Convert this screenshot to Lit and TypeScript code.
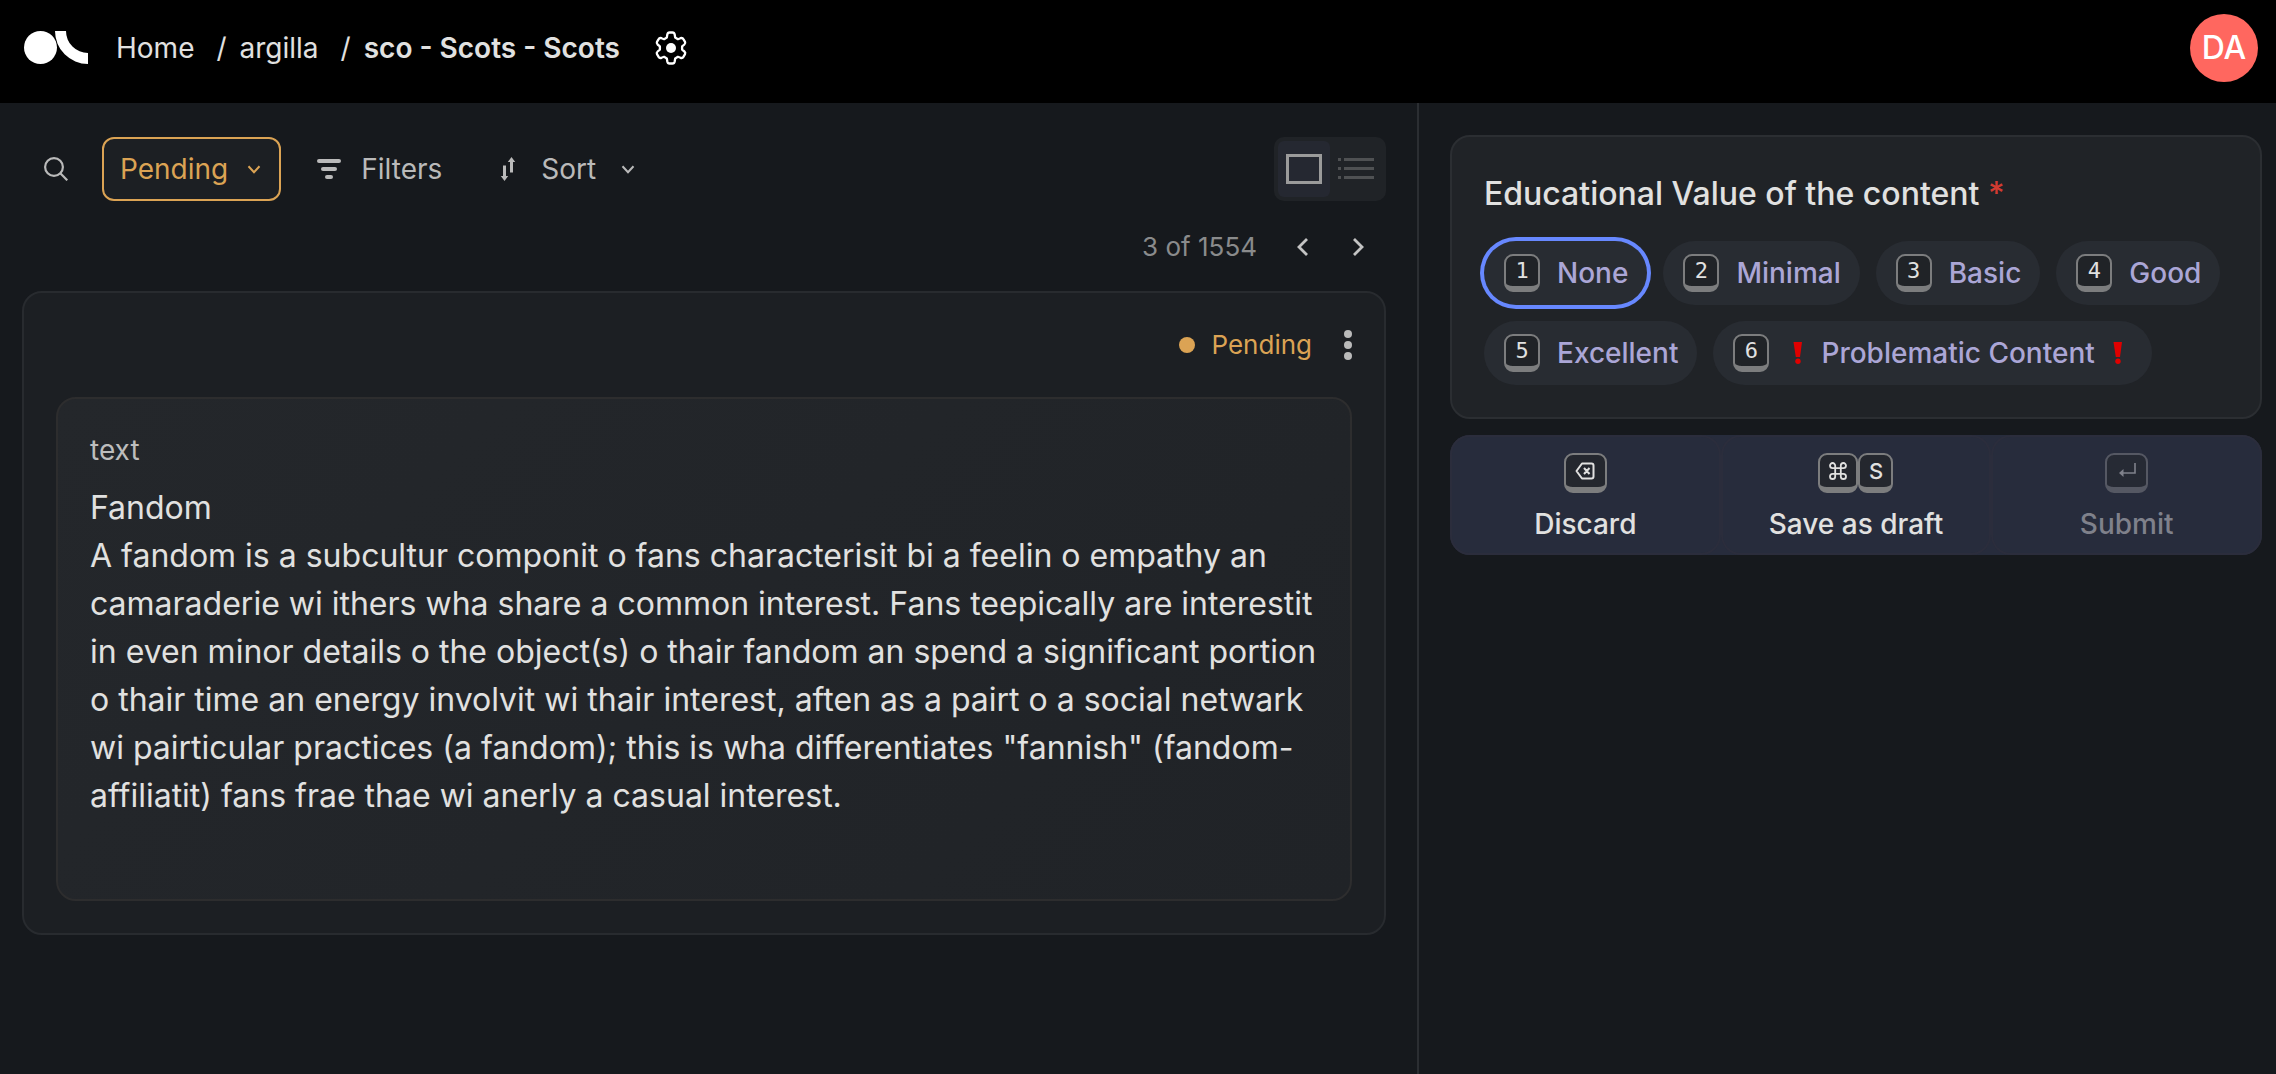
import { LitElement, html, css } from "lit";
import { customElement } from "lit/decorators.js";

interface Option { key: string; label: string; flagged?: boolean }

@customElement("app-root")
export class AppRoot extends LitElement {
  private options: Option[] = [
    { key: "1", label: "None" },
    { key: "2", label: "Minimal" },
    { key: "3", label: "Basic" },
    { key: "4", label: "Good" },
    { key: "5", label: "Excellent" },
    { key: "6", label: "Problematic Content", flagged: true },
  ];

  static styles = css`
    :host {
      display: flex;
      flex-direction: column;
      min-height: 100vh;
      background: #16191d;
      color: #e1e1e0;
      font-family: Inter, "Liberation Sans", sans-serif;
      font-size: 28px;
      line-height: 36px;
    }
    * { box-sizing: border-box; }
    svg { display: block; flex: none; }
    button {
      font: inherit;
      color: inherit;
      background: none;
      border: 0;
      padding: 0;
      margin: 0;
      display: flex;
      align-items: center;
    }
    a { color: inherit; text-decoration: none; }

    .topbar {
      display: flex;
      align-items: center;
      height: 103px;
      padding: 0 18px 8px 24px;
      background: #000;
    }
    .crumbs {
      display: flex;
      align-items: center;
      margin-left: 28px;
      flex: 1;
    }
    .crumbs ol {
      display: flex;
      list-style: none;
      margin: 0;
      padding: 0;
    }
    .crumb + .crumb::before { content: "/"; margin: 0 13px 0 22px; }
    .current { font-weight: 600; }
    .gear { margin-left: 34px; color: #fff; }
    .avatar {
      justify-content: center;
      width: 68px;
      height: 68px;
      border-radius: 50%;
      background: #ff675f;
      color: #fff;
      font-size: 32px;
      font-weight: 500;
    }

    .columns { display: flex; flex: 1; }
    .main {
      flex: 1;
      min-width: 0;
      padding: 34px 31px 32px 22px;
    }
    .side {
      width: 859px;
      flex: none;
      padding: 32px 14px 32px 31px;
      border-left: 2px solid #2b2e32;
    }

    .toolbar { display: flex; align-items: center; color: #bababa; }
    .search { padding: 20px 20px 20px 22px; }
    .status {
      height: 64px;
      margin-left: 14px;
      padding: 0 18px 0 16px;
      gap: 19px;
      border: 2px solid #dba354;
      border-radius: 12px;
      background: #1c1f23;
      color: #dba354;
    }
    .filters { gap: 20px; margin-left: 36px; }
    .sort { gap: 25px; margin-left: 58px; }
    .views {
      display: flex;
      margin-left: auto;
      padding: 4px;
      height: 64px;
      border-radius: 10px;
      background: #202327;
    }
    .view { width: 52px; justify-content: center; border-radius: 6px; color: #4f5153; }
    .view.on { background: #252831; color: #9b9b9b; }

    .pager {
      display: flex;
      align-items: center;
      justify-content: flex-end;
      gap: 18px;
      height: 48px;
      margin: 22px 9px 20px 0;
      color: #8a8b8c;
      font-size: 26px;
    }
    .position { margin-right: 8px; }
    .step { width: 38px; height: 36px; justify-content: center; color: #c4c4c4; }

    .record {
      padding: 0 32px 32px;
      border: 2px solid #282b2f;
      border-radius: 20px;
      background: #1c1f23;
    }
    .record-head {
      display: flex;
      align-items: center;
      justify-content: flex-end;
      height: 104px;
      color: #dba354;
      font-size: 26px;
    }
    .dot { width: 16px; height: 16px; border-radius: 50%; background: #dba354; margin-right: 16px; }
    .more { margin-left: 32px; color: #bababa; }
    .field {
      padding: 33px 32px 79px;
      border: 2px solid #2d2d2e;
      border-radius: 20px;
      background: linear-gradient(135deg, #24272b, #202327);
    }
    .field-name { margin: 0 0 16px; font-size: 28px; font-weight: 400; line-height: 36px; color: #bdbdbd; }
    .field-text { margin: 0; font-size: 32px; line-height: 48px; }

    .question {
      margin: 0;
      padding: 33px 32px 32px;
      border: 2px solid #2b2e32;
      border-radius: 20px;
      background: #202327;
    }
    .title { margin: 0 0 23px; font-size: 32px; font-weight: 500; line-height: 48px; }
    .required { color: #d23b31; }
    .options { display: flex; flex-wrap: wrap; gap: 16px; }
    .option {
      height: 64px;
      padding: 0 19px 0 20px;
      gap: 17px;
      border-radius: 32px;
      background: #282c32;
      color: #aba6d6;
      font-weight: 500;
    }
    .option.focused { box-shadow: 0 0 0 4px #6788ff; }
    .option-label { display: flex; }
    .flag { display: flex; align-items: center; width: 28px; justify-content: center; color: #e00000; }
    .flag.before { margin: 0 9px 0 -2px; }
    .flag.after { margin: 0 1px 0 9px; }

    .key {
      display: flex;
      align-items: center;
      justify-content: center;
      width: 36px;
      height: 38px;
      border: 2px solid #7c7d7e;
      border-bottom-width: 6px;
      border-radius: 9px;
      background: #202327;
      color: #e1e1e0;
      font-family: "DejaVu Sans Mono", monospace;
      font-size: 22px;
      font-weight: 400;
      line-height: 28px;
    }
    .actions {
      display: grid;
      grid-template-columns: repeat(3, 1fr);
      margin-top: 16px;
      border-radius: 20px;
      background: #272c3c;
    }
    .action {
      flex-direction: column;
      gap: 13px;
      height: 120px;
      padding-top: 16px;
      border: 2px solid #2b2d3c;
      border-radius: 20px;
      font-weight: 500;
    }
    .action .key {
      width: 43px;
      height: 40px;
      background: #24272e;
      font-family: Inter, sans-serif;
      font-size: 22px;
      font-weight: 500;
    }
    .action .key.narrow { width: 35px; }
    .action .key.mid { width: 40px; }
    .keys { display: flex; }
    .action[disabled] { color: #7f818b; }
    .action[disabled] .key { border-color: #555863; background: #262a34; color: #7f818b; }
  `;

  private chevron() {
    return html`<svg width="14" height="9" viewBox="0 0 14 9" fill="none" stroke="currentColor" stroke-width="2"><path d="M1.500 1.200l5.500 6 5.500-6" /></svg>`;
  }

  private flag(side: string) {
    return html`<span class="flag ${side}"><svg width="10" height="22" viewBox="0 0 10 22" fill="currentColor"><path d="M0.5 0H9L7 15H2.8z" /><circle cx="5" cy="19.3" r="2.7" /></svg></span>`;
  }

  render() {
    return html`
      <header class="topbar">
        <a href="#" aria-label="Argilla"><svg width="64" height="34" viewBox="0 0 64 34" fill="#fff"><circle cx="16.5" cy="16.5" r="16.5" /><path d="M31 0H42A22 22 0 0 0 64 22V33A33 33 0 0 1 31 0z" /></svg></a>
        <nav class="crumbs" aria-label="Breadcrumb">
          <ol>
            <li class="crumb"><a href="#">Home</a></li>
            <li class="crumb"><a href="#">argilla</a></li>
            <li class="crumb"><a class="current" href="#">sco - Scots - Scots</a></li>
          </ol>
          <button class="gear" aria-label="Settings">
            <svg width="34" height="34" viewBox="0 0 34 34" fill="none" stroke="currentColor" stroke-width="2.3" stroke-linejoin="round"><path d="M12.8 6.6L13.3 3.5Q13.7 1.5 15.5 1.5H18.5Q20.3 1.5 20.7 3.5L21.2 6.6L23.9 8.2L26.5 7.2Q28.5 6.5 29.4 8.1L31 10.8Q31.8 12.3 30.4 13.5L28.1 15.4V18.6L30.4 20.5Q31.8 21.7 31 23.2L29.4 25.9Q28.5 27.5 26.5 26.8L23.9 25.8L21.2 27.4L20.7 30.5Q20.3 32.5 18.5 32.5H15.5Q13.7 32.5 13.3 30.5L12.8 27.4L10.1 25.8L7.5 26.8Q5.5 27.5 4.6 25.9L3 23.2Q2.2 21.7 3.6 20.5L5.9 18.6V15.4L3.6 13.5Q2.2 12.3 3 10.8L4.6 8.1Q5.5 6.5 7.5 7.2L10.1 8.2z" /><circle cx="17" cy="17" r="5" fill="currentColor" stroke="none" /></svg>
          </button>
        </nav>
        <button class="avatar" aria-label="Account">DA</button>
      </header>
      <div class="columns">
        <main class="main">
          <div class="toolbar">
            <button class="search" aria-label="Search"><svg width="24" height="24" viewBox="0 0 24 24" fill="none" stroke="currentColor" stroke-width="2.2"><circle cx="10" cy="10" r="8.9" /><path d="M16.3 16.3L23.3 23.3" /></svg></button>
            <button class="status">Pending ${this.chevron()}</button>
            <button class="filters"><svg width="24" height="20" viewBox="0 0 24 20" fill="currentColor"><rect width="24" height="4" rx="2" /><rect x="4" y="8" width="16" height="4" rx="2" /><rect x="8" y="16" width="8" height="4" rx="2" /></svg>Filters</button>
            <button class="sort"><svg width="16" height="24" viewBox="0 0 16 24" fill="currentColor"><path d="M3 8.500h3V19h2.200L4.500 24 0.800 19H3zM10 15.500V5H7.800L11.500 0l3.700 5H13v10.500z" /></svg>Sort ${this.chevron()}</button>
            <div class="views">
              <button class="view on" aria-label="Focus view"><svg width="36" height="30" viewBox="0 0 36 30" fill="none" stroke="currentColor" stroke-width="3"><rect x="1.5" y="1.5" width="33" height="27" /></svg></button>
              <button class="view" aria-label="List view"><svg width="36" height="22" viewBox="0 0 36 22" fill="currentColor"><path d="M0 0h3v3H0zM0 9h3v3H0zM0 18h3v3H0z" /><path d="M6 0h30v3H6zM6 9h30v3H6zM6 18h30v3H6z" /></svg></button>
            </div>
          </div>
          <div class="pager">
            <span class="position">3 of 1554</span>
            <button class="step" aria-label="Previous"><svg width="11" height="18" viewBox="0 0 11 18" fill="none" stroke="currentColor" stroke-width="2.8"><path d="M10 1L2 9l8 8" /></svg></button>
            <button class="step" aria-label="Next"><svg width="11" height="18" viewBox="0 0 11 18" fill="none" stroke="currentColor" stroke-width="2.8"><path d="M1 1l8 8-8 8" /></svg></button>
          </div>
          <article class="record">
            <div class="record-head">
              <span class="dot"></span>Pending
              <button class="more" aria-label="More"><svg width="8" height="30" viewBox="0 0 8 30" fill="currentColor"><circle cx="4" cy="4" r="4" /><circle cx="4" cy="15" r="4" /><circle cx="4" cy="26" r="4" /></svg></button>
            </div>
            <section class="field">
              <h2 class="field-name">text</h2>
              <p class="field-text">Fandom<br />A fandom is a subcultur componit o fans characterisit bi a feelin o empathy an camaraderie wi ithers wha share a common interest. Fans teepically are interestit in even minor details o the object(s) o thair fandom an spend a significant portion o thair time an energy involvit wi thair interest, aften as a pairt o a social netwark wi pairticular practices (a fandom); this is wha differentiates "fannish" (fandom-affiliatit) fans frae thae wi anerly a casual interest.</p>
            </section>
          </article>
        </main>
        <aside class="side">
          <section class="question">
            <h2 class="title">Educational Value of the content <span class="required">*</span></h2>
            <div class="options">
              ${this.options.map((o, i) => html`<button class="option ${i === 0 ? "focused" : ""}">
                <span class="key">${o.key}</span>
                <span class="option-label">${o.flagged ? this.flag("before") : ""}${o.label}${o.flagged ? this.flag("after") : ""}</span>
              </button>`)}
            </div>
          </section>
          <div class="actions">
            <button class="action"><span class="keys"><span class="key"><svg width="20" height="18" viewBox="0 0 20 18" fill="none" stroke="currentColor" stroke-width="2" stroke-linejoin="round"><path d="M7 1.5H16.5Q18.5 1.5 18.5 3.5V14.5Q18.5 16.5 16.5 16.5H7L1.5 9zM9 6l5.500 6M14.5 6L9 12" /></svg></span></span>Discard</button>
            <button class="action"><span class="keys"><span class="key mid"><svg width="18" height="18" viewBox="0 0 18 18" fill="none" stroke="currentColor" stroke-width="1.8"><path d="M6.2 6.2V3.6a2.6 2.6 0 1 0-2.6 2.6h10.8a2.6 2.6 0 1 0-2.6-2.6v10.8a2.6 2.6 0 1 0 2.6-2.6H3.6a2.6 2.6 0 1 0 2.6 2.6z" /></svg></span><span class="key narrow">S</span></span>Save as draft</button>
            <button class="action" disabled><span class="keys"><span class="key"><svg width="18" height="16" viewBox="0 0 18 16" fill="none" stroke="currentColor" stroke-width="1.6"><path d="M17 0V10H2" /><path d="M5.5 6L1 10l4.5 4z" fill="currentColor" stroke="none" /></svg></span></span>Submit</button>
          </div>
        </aside>
      </div>
    `;
  }
}
